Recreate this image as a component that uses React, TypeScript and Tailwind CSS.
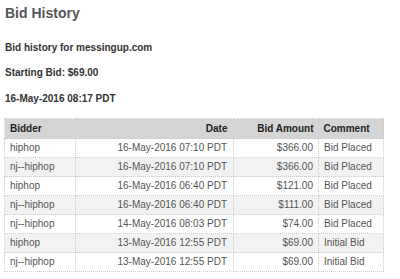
const bids = [
  { bidder: "hiphop", date: "16-May-2016 07:10 PDT", amount: "$366.00", comment: "Bid Placed" },
  { bidder: "nj--hiphop", date: "16-May-2016 07:10 PDT", amount: "$366.00", comment: "Bid Placed" },
  { bidder: "hiphop", date: "16-May-2016 06:40 PDT", amount: "$121.00", comment: "Bid Placed" },
  { bidder: "nj--hiphop", date: "16-May-2016 06:40 PDT", amount: "$111.00", comment: "Bid Placed" },
  { bidder: "nj--hiphop", date: "14-May-2016 08:03 PDT", amount: "$74.00", comment: "Bid Placed" },
  { bidder: "hiphop", date: "13-May-2016 12:55 PDT", amount: "$69.00", comment: "Initial Bid" },
  { bidder: "nj--hiphop", date: "13-May-2016 12:55 PDT", amount: "$69.00", comment: "Initial Bid" },
];

export default function App() {
  return (
    <div className="min-h-[279px] bg-white pl-[5px] font-['Liberation_Sans',Arial,sans-serif]">
      <h1 className="pt-[5px] text-[14px] font-bold leading-[16px] text-[#555]">Bid History</h1>

      <p className="mt-[21px] text-[10px] font-bold leading-[12px] text-[#333]">
        Bid history for messingup.com
      </p>
      <p className="mt-[13px] text-[10px] font-bold leading-[12px] text-[#333]">Starting Bid: $69.00</p>
      <p className="mt-[14px] text-[10px] font-bold leading-[12px] text-[#333]">16-May-2016 08:17 PDT</p>

      {/* bid table */}
      <table className="mt-[13px] w-[379px] -ml-px table-fixed border-collapse border border-dotted border-[#ccc] text-[10px] leading-[12px]">
        <colgroup>
          <col className="w-[71px]" />
          <col className="w-[158px]" />
          <col className="w-[85px]" />
          <col className="w-[65px]" />
        </colgroup>
        <thead>
          <tr className="h-[20px] bg-[#d5d5d5] font-bold text-[#222]">
            <th className="px-[5px] text-left">Bidder</th>
            <th className="px-[6px] text-right">Date</th>
            <th className="px-[5px] text-right">Bid Amount</th>
            <th className="px-[5px] text-left">Comment</th>
          </tr>
        </thead>
        <tbody>
          {bids.map((b, i) => (
            <tr
              key={i}
              className={`h-[19px] text-[#555] ${i % 2 === 1 ? "bg-[#f2f2f2]" : "bg-white"}`}
            >
              <td className="border border-dotted border-[#ccc] px-[5px]">{b.bidder}</td>
              <td className="border border-dotted border-[#ccc] px-[6px] text-right">{b.date}</td>
              <td className="border border-dotted border-[#ccc] px-[5px] text-right">{b.amount}</td>
              <td className="border border-dotted border-[#ccc] px-[5px]">{b.comment}</td>
            </tr>
          ))}
        </tbody>
      </table>
    </div>
  );
}
